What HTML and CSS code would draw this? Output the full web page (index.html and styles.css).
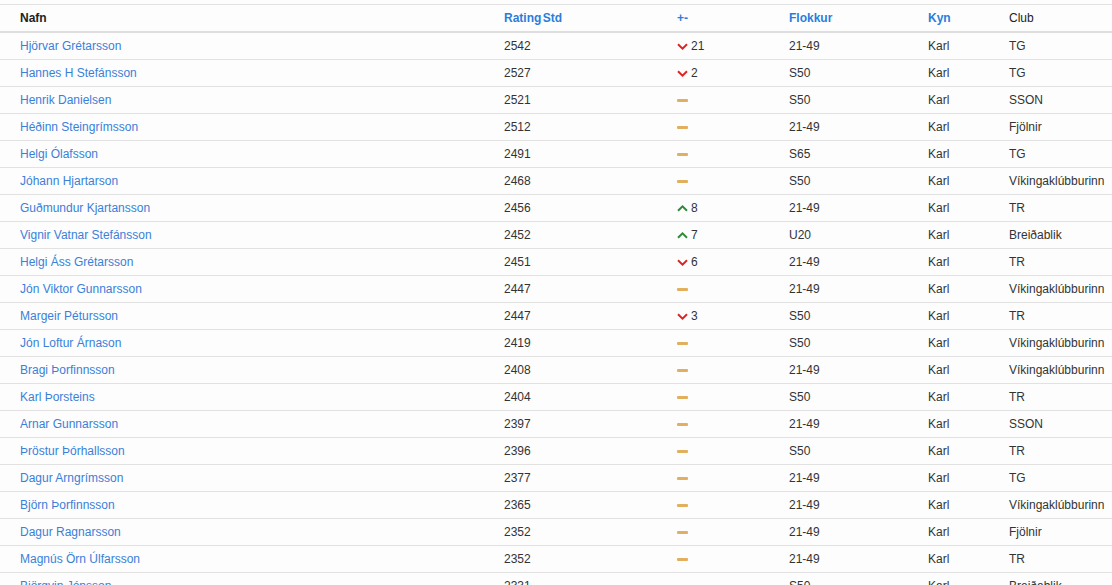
FILE: index.html
```html
<!DOCTYPE html>
<html>
<head>
<meta charset="utf-8">
<link rel="stylesheet" href="styles.css">
</head>
<body>
<table class="ratings">
  <colgroup>
    <col class="c-name"><col class="c-rating"><col class="c-diff"><col class="c-cat"><col class="c-sex"><col class="c-club">
  </colgroup>
  <thead>
    <tr>
      <th class="dark">Nafn</th>
      <th class="sort tight">Rating Std</th>
      <th class="sort">+-</th>
      <th class="sort">Flokkur</th>
      <th class="sort">Kyn</th>
      <th class="plain">Club</th>
    </tr>
  </thead>
  <tbody id="rows"></tbody>
</table>
<script src="app.js"></script>
</body>
</html>
```
FILE: styles.css
```css
html, body {
  margin: 0;
  padding: 0;
  background: #fdfdfd;
}
body {
  padding-top: 4px;
  font-family: "Liberation Sans", Arial, sans-serif;
  font-size: 12px;
  color: #333;
}
.ratings {
  width: 1112px;
  border-collapse: collapse;
  table-layout: fixed;
}
.c-name { width: 484px; }
.c-rating { width: 173px; }
.c-diff { width: 112px; }
.c-cat { width: 139px; }
.c-sex { width: 81px; }
.c-club { width: 123px; }
.ratings th, .ratings td {
  padding: 5px 0 5px 20px;
  line-height: 16px;
  text-align: left;
  white-space: nowrap;
  overflow: hidden;
}
.ratings th {
  border-top: 1px solid #e2e2e2;
  border-bottom: 2px solid #dedede;
  font-weight: bold;
}
.ratings td {
  border-top: 1px solid #e2e2e2;
}
.ratings tbody tr:first-child td { border-top: none; }
th.dark { color: #222; }
th.sort { color: #2a7ddb; }
th.tight { word-spacing: -2px; }
th.plain { color: #222; font-weight: normal; }
td.name { color: #3a80d9; }
.diff {
  display: flex;
  align-items: center;
  gap: 3px;
}
.chev {
  width: 11px;
  height: 7px;
  display: block;
}
.dash {
  display: block;
  width: 11px;
  height: 3px;
  background: #e2b05c;
  border-radius: 1px;
}
```
FILE: app.js
```js
const data = [
  ["Hjörvar Grétarsson", 2542, -21, "21-49", "TG"],
  ["Hannes H Stefánsson", 2527, -2, "S50", "TG"],
  ["Henrik Danielsen", 2521, 0, "S50", "SSON"],
  ["Héðinn Steingrímsson", 2512, 0, "21-49", "Fjölnir"],
  ["Helgi Ólafsson", 2491, 0, "S65", "TG"],
  ["Jóhann Hjartarson", 2468, 0, "S50", "Víkingaklúbburinn"],
  ["Guðmundur Kjartansson", 2456, 8, "21-49", "TR"],
  ["Vignir Vatnar Stefánsson", 2452, 7, "U20", "Breiðablik"],
  ["Helgi Áss Grétarsson", 2451, -6, "21-49", "TR"],
  ["Jón Viktor Gunnarsson", 2447, 0, "21-49", "Víkingaklúbburinn"],
  ["Margeir Pétursson", 2447, -3, "S50", "TR"],
  ["Jón Loftur Árnason", 2419, 0, "S50", "Víkingaklúbburinn"],
  ["Bragi Þorfinnsson", 2408, 0, "21-49", "Víkingaklúbburinn"],
  ["Karl Þorsteins", 2404, 0, "S50", "TR"],
  ["Arnar Gunnarsson", 2397, 0, "21-49", "SSON"],
  ["Þröstur Þórhallsson", 2396, 0, "S50", "TR"],
  ["Dagur Arngrímsson", 2377, 0, "21-49", "TG"],
  ["Björn Þorfinnsson", 2365, 0, "21-49", "Víkingaklúbburinn"],
  ["Dagur Ragnarsson", 2352, 0, "21-49", "Fjölnir"],
  ["Magnús Örn Úlfarsson", 2352, 0, "21-49", "TR"],
  ["Björgvin Jónsson", 2331, 0, "S50", "Breiðablik"]
];
const down = '<svg class="chev" viewBox="0 0 11 7"><path d="M1 1.2 L5.5 5.6 L10 1.2" fill="none" stroke="#e02424" stroke-width="2"/></svg>';
const up = '<svg class="chev" viewBox="0 0 11 7"><path d="M1 5.8 L5.5 1.4 L10 5.8" fill="none" stroke="#2e8b3a" stroke-width="2"/></svg>';
const tb = document.getElementById("rows");
tb.innerHTML = data.map(r => {
  let d;
  if (r[2] < 0) d = down + "<span>" + (-r[2]) + "</span>";
  else if (r[2] > 0) d = up + "<span>" + r[2] + "</span>";
  else d = '<span class="dash"></span>';
  return `<tr><td class="name">${r[0]}</td><td>${r[1]}</td><td><div class="diff">${d}</div></td><td>${r[3]}</td><td>Karl</td><td>${r[4]}</td></tr>`;
}).join("");
```
